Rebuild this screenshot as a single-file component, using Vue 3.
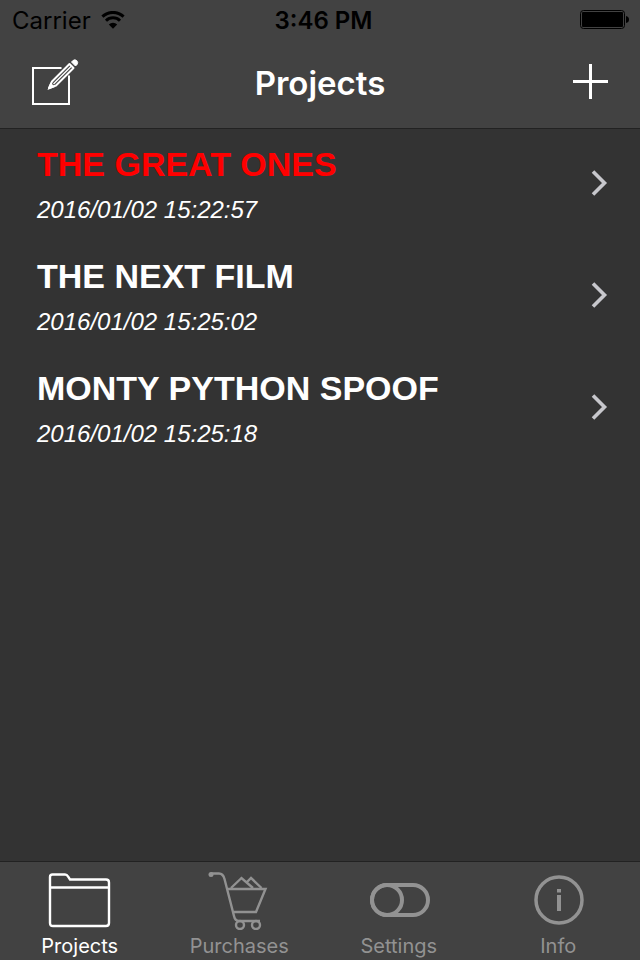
<template>
  <div class="app">
    <!-- status bar + navigation -->
    <header class="top">
      <div class="status">
        <div class="carrier">
          <span>Carrier</span>
          <svg width="24" height="18" viewBox="0 0 24 18">
            <path d="M1.4 5.6 A15.5 15.5 0 0 1 22.6 5.6" class="wave" />
            <path d="M5 9.7 A10 10 0 0 1 19 9.7" class="wave" />
            <path d="M12 17.8 L7.8 13.4 A6 6 0 0 1 16.2 13.4 Z" />
          </svg>
        </div>
        <time class="clock">3:46 PM</time>
        <svg class="battery" width="50" height="20" viewBox="0 0 50 20">
          <rect x="0.5" y="0.5" width="44" height="18" rx="3" fill="none" stroke="#000" />
          <rect x="2" y="2" width="41" height="15" rx="1" />
          <path d="M46 6 Q49 6.5 49 9.5 Q49 12.5 46 13 Z" />
        </svg>
      </div>
      <nav class="navbar">
        <button class="nav-btn" aria-label="Edit">
          <svg width="48" height="48" viewBox="0 0 48 48" fill="none" stroke="#fff" stroke-width="2">
            <path d="M29.5 11 H1 V47 H37 V18.5" />
            <path d="M17 31 L20 24.5 L37.500 7 L41.500 11 L24 28.5 Z" stroke-linejoin="round" />
            <path d="M21.500 27 L39.500 9" stroke-width="1.500" />
            <path d="M39.500 5 L41 3.500 Q43 2 44.800 3.700 Q46.500 5.500 45 7.500 L43.500 9 Z" fill="#fff" stroke-width="1" />
            <path d="M15.500 33 L18.500 25.500 L23 30 Z" fill="#fff" stroke="none" />
          </svg>
        </button>
        <h1>Projects</h1>
        <button class="nav-btn add" aria-label="Add">
          <svg width="35" height="35" viewBox="0 0 35 35">
            <path d="M16 0 H19 V16 H35 V19 H19 V35 H16 V19 H0 V16 H16 Z" fill="#fff" />
          </svg>
        </button>
      </nav>
    </header>

    <!-- project list -->
    <main>
      <ul class="projects">
        <li v-for="p in projects" :key="p.name">
          <button class="project" @click="selected = p.name">
            <span class="info">
              <span class="name" :class="{ selected: selected === p.name }">{{ p.name }}</span>
              <span class="date">{{ p.date }}</span>
            </span>
            <svg width="18" height="28" viewBox="0 0 18 28">
              <path d="M2 2.500 L13.500 14 L2 25.500" fill="none" stroke="#c7c7cc" stroke-width="3.600" />
            </svg>
          </button>
        </li>
      </ul>
    </main>

    <!-- tab bar -->
    <nav class="tabs">
      <button v-for="t in tabs" :key="t" class="tab" :class="{ active: tab === t }" @click="tab = t">
        <svg width="64" height="60" viewBox="0 0 64 60" fill="none" stroke="currentColor" stroke-width="2.400">
          <template v-if="t === 'Projects'">
            <path d="M2 53 V7 Q2 4.500 4.500 4.500 H17 Q19 4.500 20 6.500 L22 9.500 H58 Q61 9.500 61 12.500 V53 Q61 56 58 56 H5 Q2 56 2 53 Z" />
            <path d="M2 17.500 H61" />
          </template>
          <template v-else-if="t === 'Purchases'">
            <path d="M4 3.500 H12 Q16 3.500 17.500 9 L27 46 Q28 51 32 51 H53" />
            <circle cx="4" cy="4.500" r="2.500" fill="currentColor" stroke="none" />
            <path d="M20.500 19 H58.500 L49 42 H26.500" />
            <path d="M24 18 L34.500 8 L46 18 M40 12 L44 8 L54.500 18" />
            <circle cx="33" cy="55" r="4" />
            <circle cx="49" cy="55" r="4" />
          </template>
          <template v-else-if="t === 'Settings'">
            <rect x="5" y="15" width="56" height="30" rx="15" stroke-width="4" />
            <circle cx="20" cy="30" r="15" stroke-width="4" />
          </template>
          <template v-else>
            <circle cx="33" cy="30" r="23" stroke-width="3.500" />
            <path d="M33 25 V41 M33 19 V22.500" stroke-width="4" />
          </template>
        </svg>
        <span>{{ t }}</span>
      </button>
    </nav>
  </div>
</template>

<script setup>
import { ref } from 'vue'

const projects = [
  { name: 'THE GREAT ONES', date: '2016/01/02 15:22:57' },
  { name: 'THE NEXT FILM', date: '2016/01/02 15:25:02' },
  { name: 'MONTY PYTHON SPOOF', date: '2016/01/02 15:25:18' },
]
const tabs = ['Projects', 'Purchases', 'Settings', 'Info']

const selected = ref('THE GREAT ONES')
const tab = ref('Projects')
</script>

<style>
body {
  margin: 0;
  background: #333;
}
</style>

<style scoped>
.app {
  min-height: 100vh;
  display: flex;
  flex-direction: column;
  background: #333;
  color: #fff;
  font-family: Inter, "Liberation Sans", sans-serif;
}
button {
  padding: 0;
  border: none;
  background: none;
  color: inherit;
  font-family: inherit;
  cursor: pointer;
}
svg { display: block; }

/* ===== header ===== */
.top {
  background: #424242;
  border-bottom: 1px solid #222;
}
.status {
  display: grid;
  grid-template-columns: 1fr auto 1fr;
  align-items: center;
  height: 40px;
  padding: 0 10px 0 12px;
  color: #000;
  font-size: 24px;
}
.carrier {
  display: flex;
  align-items: center;
  gap: 10px;
}
.wave {
  fill: none;
  stroke: #000;
  stroke-width: 3;
}
.clock {
  padding-left: 5px;
  font-weight: 600;
}
.battery { justify-self: end; }
.navbar {
  display: grid;
  grid-template-columns: 1fr auto 1fr;
  align-items: center;
  height: 86px;
  padding: 0 32px 2px;
}
.nav-btn {
  justify-self: start;
  padding-bottom: 4px;
}
.add { justify-self: end; }
h1 {
  margin: 0;
  font-size: 33px;
  font-weight: 600;
}

/* ===== project list ===== */
main { flex: 1; }
.projects {
  margin: 0;
  padding: 0;
  list-style: none;
}
.project {
  display: flex;
  align-items: center;
  justify-content: space-between;
  width: 100%;
  height: 112px;
  padding: 0 31px 4px 37px;
  text-align: left;
}
.info {
  display: flex;
  flex-direction: column;
  gap: 12px;
  padding-top: 2px;
  font-family: "Arial Rounded MT Bold", "Liberation Sans", Arial, sans-serif;
}
.name {
  font-size: 34px;
  line-height: 40px;
  font-weight: 700;
}
.name.selected { color: #f00; }
.date {
  font-family: "Liberation Sans", Arial, sans-serif;
  font-size: 24px;
  line-height: 28px;
  font-style: italic;
}

/* ===== tab bar ===== */
.tabs {
  display: flex;
  height: 98px;
  padding-right: 2px;
  background: #424242;
  border-top: 1px solid #222;
}
.tab {
  flex: 1;
  display: flex;
  flex-direction: column;
  align-items: center;
  padding-top: 8px;
  gap: 4px;
  color: #929292;
  font-size: 20px;
  line-height: 24px;
}
.tab.active { color: #fff; }
</style>
